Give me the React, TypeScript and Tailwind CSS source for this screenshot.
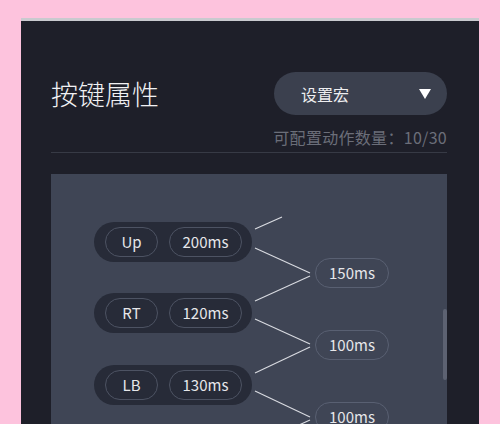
const font = { fontFamily: '"Noto Sans CJK SC", "Noto Sans", sans-serif' };

type Step = { key: string; ms: string; top: number };

const steps: Step[] = [
  { key: "Up", ms: "200ms", top: 48 },
  { key: "RT", ms: "120ms", top: 119 },
  { key: "LB", ms: "130ms", top: 191 },
];

const delays = [
  { ms: "150ms", top: 84 },
  { ms: "100ms", top: 156 },
  { ms: "100ms", top: 228 },
];

const StepNode = ({ step }: { step: Step }) => (
  <div
    className="absolute left-[43px] flex h-[40px] w-[158px] items-center gap-[11px] rounded-full bg-[#272b38] pl-[11px]"
    style={{ top: step.top }}
  >
    <div className="flex h-[30px] w-[53px] items-center justify-center rounded-full border border-[#4d5363] text-[15px] text-[#e6e7ea]">
      {step.key}
    </div>
    <div className="flex h-[30px] w-[73px] items-center justify-center rounded-full border border-[#4d5363] text-[15px] text-[#e6e7ea]">
      {step.ms}
    </div>
  </div>
);

export default function App() {
  return (
    <div className="h-[424px] w-[500px] overflow-hidden bg-[#fdc3dd] pt-[18px]" style={font}>
      <div className="ml-[21px] h-[420px] w-[458px] border-t-[3px] border-[#c9cacf] bg-[#1e1f29] pl-[30px] pr-[32px] pt-[51px]">
        {/* header */}
        <div className="flex h-[43px] items-center justify-between">
          <h1 className="text-[27px] font-light leading-none text-[#f1f1f3]">按键属性</h1>
          <button className="flex h-[43px] w-[173px] items-center justify-between rounded-full bg-[#3b404e] pl-[27px] pr-[16px] text-[16px] text-[#eeeef0]">
            <span>设置宏</span>
            <svg width="12" height="10" viewBox="0 0 12 10">
              <path d="M0 0 L12 0 L6 10 Z" fill="#ffffff" />
            </svg>
          </button>
        </div>
        <p className="mt-[10px] text-right text-[16px] leading-6 tracking-[0.3px] text-[#6b6e79]">可配置动作数量：10/30</p>
        <div className="mt-[3px] h-px bg-[#373a45]" />

        {/* macro canvas */}
        <div className="relative mt-[21px] h-[300px] bg-[#3f4555]">
          <svg className="absolute inset-0" width="396" height="300">
            <g stroke="#d9dbe1" strokeWidth="1.1" fill="none">
              <line x1="204" y1="55" x2="231" y2="43" />
              <line x1="204" y1="74" x2="259" y2="99" />
              <line x1="259" y1="102" x2="204" y2="127" />
              <line x1="204" y1="145" x2="259" y2="170" />
              <line x1="259" y1="173" x2="204" y2="199" />
              <line x1="204" y1="217" x2="259" y2="243" />
              <line x1="259" y1="246" x2="204" y2="271" />
            </g>
          </svg>

          {steps.map((s) => (
            <StepNode key={s.key} step={s} />
          ))}

          {delays.map((d, i) => (
            <div
              key={i}
              className="absolute left-[264px] flex h-[30px] w-[74px] items-center justify-center rounded-full border border-[#596072] text-[15px] text-[#e6e7ea]"
              style={{ top: d.top }}
            >
              {d.ms}
            </div>
          ))}

          {/* scrollbar */}
          <div className="absolute left-[392px] top-[135px] h-[71px] w-[4px] rounded-full bg-[#5d6272]" />
        </div>
      </div>
    </div>
  );
}
